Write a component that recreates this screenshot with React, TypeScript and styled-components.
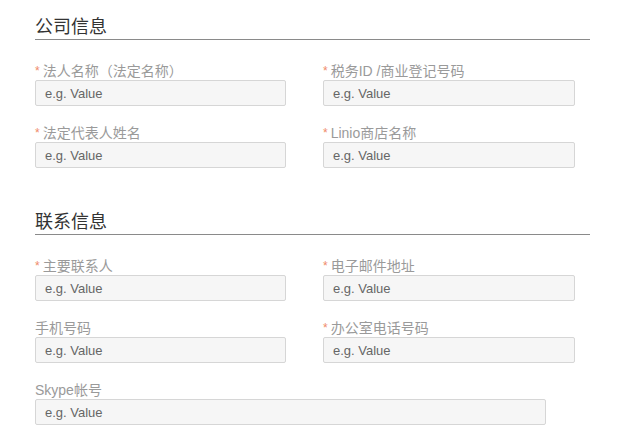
import styled, { createGlobalStyle } from "styled-components";

const GlobalStyle = createGlobalStyle`
    body {
        margin: 0;
        background: #ffffff;
        font-family: "Liberation Sans", "Noto Sans CJK SC", sans-serif;
    }
`

type Field = {
    label: string
    required?: boolean
    wide?: boolean
}

const sections: { title: string; fields: Field[] }[] = [
    {
        title: "公司信息",
        fields: [
            {label: "法人名称（法定名称）", required: true},
            {label: "税务ID /商业登记号码", required: true},
            {label: "法定代表人姓名", required: true},
            {label: "Linio商店名称", required: true},
        ],
    },
    {
        title: "联系信息",
        fields: [
            {label: "主要联系人", required: true},
            {label: "电子邮件地址", required: true},
            {label: "手机号码"},
            {label: "办公室电话号码", required: true},
            {label: "Skype帐号", wide: true},
        ],
    },
]

export default function App() {
    return (
        <>
            <GlobalStyle/>
            <Page>
                {sections.map((section) => (
                    <Section key={section.title}>
                        <Title>{section.title}</Title>
                        <Grid>
                            {section.fields.map((field) => (
                                <FieldBox key={field.label} $wide={field.wide}>
                                    <Label>
                                        {field.required && <Star>*</Star>}
                                        {field.label}
                                    </Label>
                                    <Input placeholder="e.g. Value" $wide={field.wide}/>
                                </FieldBox>
                            ))}
                        </Grid>
                    </Section>
                ))}
            </Page>
        </>
    );
}

const Page = styled.div`
    padding: 16px 0 0 35px;
    width: 555px;
`

const Section = styled.section`
    & + & {
        margin-top: 43px;
    }
`

const Title = styled.h2`
    margin: 0;
    font-size: 18px;
    font-weight: normal;
    line-height: 22px;
    color: #333333;
    padding-bottom: 1px;
    border-bottom: 1px solid #8a8a8a;
`

const Grid = styled.div`
    display: grid;
    grid-template-columns: 251px 252px;
    column-gap: 37px;
    row-gap: 19px;
    margin-top: 23px;
`

const FieldBox = styled.div<{ $wide?: boolean }>`
    display: flex;
    flex-direction: column;
    grid-column: ${({$wide}) => ($wide ? "1 / -1" : "auto")};
`

const Label = styled.label`
    font-size: 14px;
    line-height: 17px;
    height: 17px;
    color: #9a9a9a;
    white-space: nowrap;
`

const Star = styled.span`
    color: #ef8a6a;
    font-size: 12px;
    margin-right: 3px;
    position: relative;
    top: -1px;
`

const Input = styled.input<{ $wide?: boolean }>`
    box-sizing: border-box;
    width: ${({$wide}) => ($wide ? "511px" : "100%")};
    height: 26px;
    padding: 0 9px;
    border: 1px solid #d6d6d6;
    border-radius: 2px;
    background: #f6f6f6;
    font-family: "Liberation Sans", "Noto Sans CJK SC", sans-serif;
    font-size: 13px;
    color: #555555;
    outline: none;

    &::placeholder {
        color: #666666;
    }
`
